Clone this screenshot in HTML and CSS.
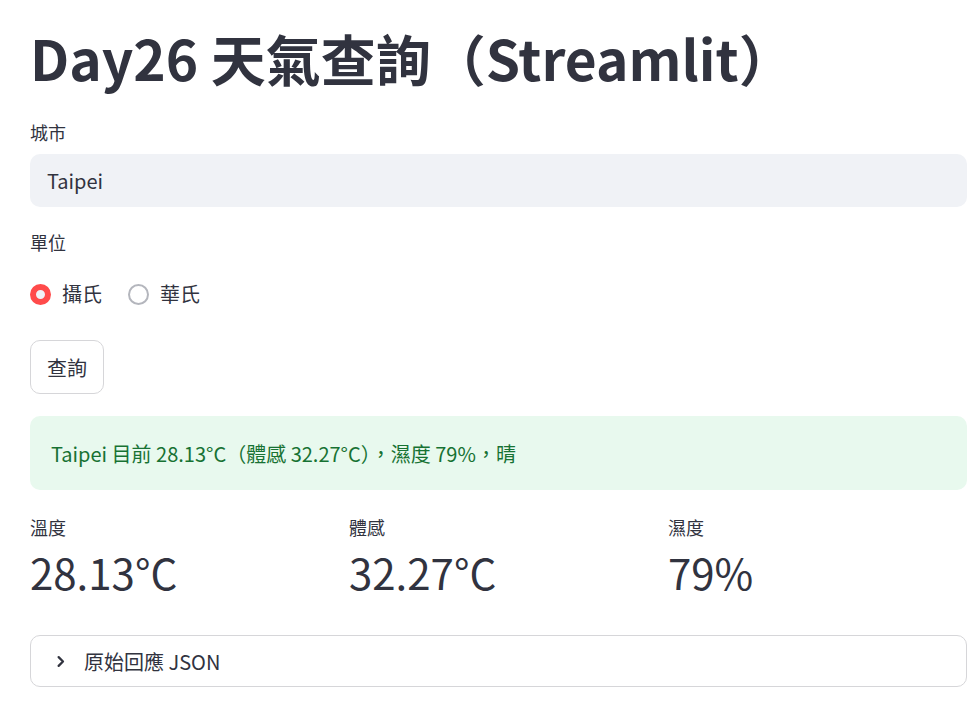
FILE: index.html
```html
<!DOCTYPE html>
<html lang="zh-Hant">
<head>
    <meta charset="UTF-8">
    <meta name="viewport" content="width=device-width, initial-scale=1.0">
    <title>Day26 天氣查詢</title>
    <link rel="stylesheet" href="styles.css">
</head>
<body>

    <div class="main">
        <h1 class="title">Day26 天氣查詢（Streamlit）</h1>

        <div class="field city">
            <label class="label" for="city">城市</label>
            <input type="text" id="city" class="text-input" value="Taipei">
        </div>

        <div class="field unit">
            <div class="label">單位</div>
            <div class="radio-group">
                <label class="radio checked"><span class="dot"></span>攝氏</label>
                <label class="radio"><span class="dot"></span>華氏</label>
            </div>
        </div>

        <button class="btn">查詢</button>

        <div class="success">Taipei 目前 28.13°C（體感 32.27°C），濕度 79%，晴</div>

        <div class="metrics">
            <div class="metric">
                <div class="metric-label">溫度</div>
                <div class="metric-value">28.13°C</div>
            </div>
            <div class="metric">
                <div class="metric-label">體感</div>
                <div class="metric-value">32.27°C</div>
            </div>
            <div class="metric">
                <div class="metric-label">濕度</div>
                <div class="metric-value">79%</div>
            </div>
        </div>

        <div class="expander">
            <svg class="chevron" width="15" height="15" viewBox="0 0 24 24"><path d="M9 5l7 7-7 7" fill="none" stroke="#31333f" stroke-width="3.6" stroke-linecap="round" stroke-linejoin="round"/></svg>
            <span>原始回應 JSON</span>
        </div>
    </div>

</body>
</html>
```

FILE: styles.css
```css
body {
    margin: 0;
    font-family: "Noto Sans CJK TC", "Noto Sans", sans-serif;
    color: #31333f;
    background: #fff;
}

.main {
    width: 937px;
    padding: 0 7px 0 30px;
}

.title {
    font-size: 55px;
    font-weight: 700;
    line-height: 1.2;
    margin: 0;
    padding-top: 24px;
}

.field.city {
    margin-top: 30px;
}

.field.unit {
    margin-top: 23px;
}

.label {
    display: block;
    font-size: 18px;
    line-height: 25.5px;
    margin-bottom: 8px;
}

.text-input {
    box-sizing: border-box;
    width: 100%;
    height: 53px;
    border: none;
    border-radius: 10px;
    background: #f0f2f6;
    padding: 0 17px;
    font-family: inherit;
    font-size: 20px;
    color: #31333f;
    outline: none;
}

.radio-group {
    display: flex;
    gap: 26px;
    margin-top: 24px;
}

.radio {
    display: flex;
    align-items: center;
    font-size: 20px;
    line-height: 30px;
}

.dot {
    box-sizing: border-box;
    width: 21px;
    height: 21px;
    border-radius: 50%;
    border: 2px solid #b4b6bd;
    margin-right: 11px;
}

.radio.checked .dot {
    border: 6.5px solid #ff4b4b;
    background: #f0f2f6;
}

.btn {
    display: block;
    margin-top: 31px;
    height: 54px;
    padding: 0 16px;
    border: 1px solid #d6d6d9;
    border-radius: 10px;
    background: #fff;
    font-family: inherit;
    font-size: 20px;
    color: #31333f;
}

.success {
    margin-top: 22px;
    box-sizing: border-box;
    height: 74px;
    display: flex;
    align-items: center;
    padding: 0 21px;
    border-radius: 10px;
    background: #e8f9ee;
    color: #177233;
    font-size: 20px;
}

.metrics {
    display: grid;
    grid-template-columns: repeat(3, 1fr);
    gap: 20px;
    margin-top: 25px;
}

.metric-label {
    font-size: 18px;
    line-height: 25.5px;
}

.metric-value {
    font-size: 42px;
    line-height: 1.3;
    margin-top: 4px;
}

.expander {
    margin-top: 36px;
    box-sizing: border-box;
    height: 52px;
    display: flex;
    align-items: center;
    padding: 0 20px 0 22px;
    border: 1px solid #d6d6d9;
    border-radius: 10px;
    font-size: 20px;
}

.chevron {
    margin-right: 16px;
}
```
